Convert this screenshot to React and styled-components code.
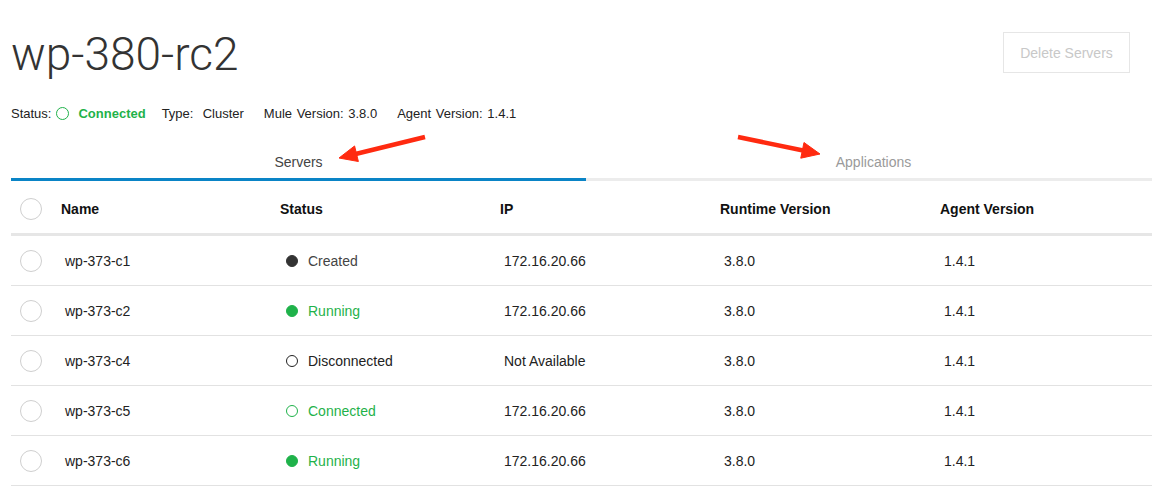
import React from "react";
import styled, { createGlobalStyle } from "styled-components";

const GlobalStyle = createGlobalStyle`
  html, body {
    margin: 0;
    padding: 0;
    background: #fff;
    overflow: hidden;
  }
  body {
    font-family: "Liberation Sans", Arial, sans-serif;
    color: #222;
  }
`;

const GREEN = "#1fb24a";

const Page = styled.div`
  position: relative;
  width: 1150px;
  padding-left: 11px;
`;

const Header = styled.div`
  display: flex;
  justify-content: space-between;
  align-items: flex-start;
  padding-top: 31px;
`;

const Title = styled.h1`
  margin: 0;
  font-family: Roboto, "Liberation Sans", sans-serif;
  font-weight: 300;
  font-size: 46px;
  line-height: 46px;
  color: #333;
`;

const GhostButton = styled.button`
  margin: 1px 31px 0 0;
  width: 127px;
  height: 41px;
  background: #fff;
  border: 1px solid #e6e6e6;
  color: #c8c8c8;
  font-family: "Liberation Sans", Arial, sans-serif;
  font-size: 14px;
`;

const Meta = styled.div`
  display: flex;
  align-items: center;
  gap: 20px;
  margin-top: 28px;
  font-size: 13px;
  height: 16px;
`;

const MetaItem = styled.span`
  display: flex;
  align-items: center;
  gap: 4px;
  word-spacing: 1px;
`;

const Ring = styled.span`
  display: inline-block;
  width: 11px;
  height: 11px;
  border-radius: 50%;
  border: 1px solid ${GREEN};
  margin: 0 5px 0 1px;
`;

const Green = styled.span`
  color: ${GREEN};
  font-weight: ${(p) => (p.$bold ? 700 : 400)};
  margin-right: -4px;
`;

const Tabs = styled.div`
  display: grid;
  grid-template-columns: 1fr 1fr;
  margin-top: 25px;
  border-bottom: 3px solid #ececec;
`;

const Tab = styled.div`
  text-align: center;
  font-size: 14px;
  height: 32px;
  line-height: 32px;
  color: ${(p) => (p.$active ? "#444" : "#9a9a9a")};
  box-shadow: ${(p) => (p.$active ? "0 3px 0 #0a84c6" : "none")};
`;

const Row = styled.div`
  display: grid;
  grid-template-columns: 50px 219px 220px 220px 220px 1fr;
  align-items: center;
  height: ${(p) => (p.$head ? "48px" : "49px")};
  padding-top: ${(p) => (p.$head ? "4px" : "0")};
  border-bottom: ${(p) => (p.$head ? "3px solid #e6e6e6" : "1px solid #e2e2e2")};
  font-size: 14px;
`;

const HeadCell = styled.div`
  font-weight: 700;
  color: #111;
`;

const Cell = styled.div`
  padding-left: 4px;
  display: flex;
  align-items: center;
  color: ${(p) => p.$color || "#222"};
`;

const Check = styled.span`
  display: block;
  width: 20px;
  height: 20px;
  border-radius: 50%;
  border: 1px solid #cfcfcf;
  margin-left: 9px;
`;

const Dot = styled.span`
  display: inline-block;
  box-sizing: border-box;
  width: 12px;
  height: 12px;
  border-radius: 50%;
  margin: 0 10px 0 2px;
  background: ${(p) => (p.$filled ? p.$tone : "transparent")};
  border: 1px solid ${(p) => p.$tone};
`;

const Overlay = styled.svg`
  position: absolute;
  left: 0;
  top: 0;
  pointer-events: none;
`;

const statusStyle = {
  Created: { tone: "#333", filled: true, text: "#444" },
  Running: { tone: GREEN, filled: true, text: GREEN },
  Disconnected: { tone: "#222", filled: false, text: "#222" },
  Connected: { tone: GREEN, filled: false, text: GREEN },
};

const servers = [
  { name: "wp-373-c1", status: "Created", ip: "172.16.20.66" },
  { name: "wp-373-c2", status: "Running", ip: "172.16.20.66" },
  { name: "wp-373-c4", status: "Disconnected", ip: "Not Available" },
  { name: "wp-373-c5", status: "Connected", ip: "172.16.20.66" },
  { name: "wp-373-c6", status: "Running", ip: "172.16.20.66" },
];

const Arrow = ({ x1, y1, x2, y2 }) => {
  const dx = x2 - x1;
  const dy = y2 - y1;
  const len = Math.hypot(dx, dy);
  const ux = dx / len;
  const uy = dy / len;
  const head = 18;
  const half = 8;
  const bx = x2 - ux * head;
  const by = y2 - uy * head;
  const pts = `${x2},${y2} ${bx - uy * half},${by + ux * half} ${bx + uy * half},${by - ux * half}`;
  return (
    <g fill="#ff2a10" stroke="#ff2a10">
      <line x1={x1} y1={y1} x2={bx + ux * 2} y2={by + uy * 2} strokeWidth="4.5" />
      <polygon points={pts} strokeWidth="1" strokeLinejoin="round" />
    </g>
  );
};

export default function App() {
  return (
    <>
      <GlobalStyle />
      <Page>
        <Header>
          <Title>wp-380-rc2</Title>
          <GhostButton>Delete Servers</GhostButton>
        </Header>
        <Meta>
          <MetaItem>
            Status: <Ring />
            <Green $bold>Connected</Green>
          </MetaItem>
          <MetaItem>Type:&nbsp; Cluster</MetaItem>
          <MetaItem>Mule Version: 3.8.0</MetaItem>
          <MetaItem>Agent Version: 1.4.1</MetaItem>
        </Meta>
        <Tabs>
          <Tab $active>Servers</Tab>
          <Tab>Applications</Tab>
        </Tabs>
        <Row $head>
          <Check />
          <HeadCell>Name</HeadCell>
          <HeadCell>Status</HeadCell>
          <HeadCell>IP</HeadCell>
          <HeadCell>Runtime Version</HeadCell>
          <HeadCell>Agent Version</HeadCell>
        </Row>
        {servers.map((s) => {
          const st = statusStyle[s.status];
          return (
            <Row key={s.name}>
              <Check />
              <Cell>{s.name}</Cell>
              <Cell $color={st.text}>
                <Dot $tone={st.tone} $filled={st.filled} />
                {s.status}
              </Cell>
              <Cell>{s.ip}</Cell>
              <Cell>3.8.0</Cell>
              <Cell>1.4.1</Cell>
            </Row>
          );
        })}
        <Overlay width="1152" height="494">
          <Arrow x1={425} y1={137} x2={339} y2={158} />
          <Arrow x1={738} y1={137} x2={820} y2={154} />
        </Overlay>
      </Page>
    </>
  );
}
